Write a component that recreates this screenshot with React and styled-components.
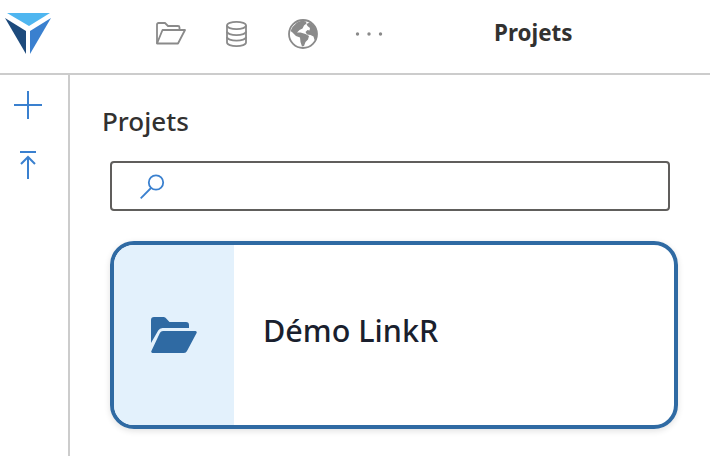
import React from "react";
import styled, { createGlobalStyle } from "styled-components";

const GlobalStyle = createGlobalStyle`
    html, body {
        margin: 0;
        padding: 0;
        background: #fff;
        font-family: "Noto Sans", "Open Sans", sans-serif;
    }
`;

const Page = styled.div`
    width: 710px;
    height: 456px;
    overflow: hidden;
    display: flex;
    flex-direction: column;
`;

const Header = styled.header`
    height: 67px;
    padding-bottom: 6px;
    flex-shrink: 0;
    display: flex;
    align-items: center;
    border-bottom: 2px solid #cccccc;
`;

const LogoBox = styled.div`
    width: 56px;
    display: flex;
    justify-content: center;
`;

const NavIcons = styled.nav`
    display: flex;
    align-items: center;
    margin-left: 100px;
`;

const NavItem = styled.div`
    width: ${(p) => p.$width}px;
    display: flex;
    align-items: center;
`;

const HeaderTitle = styled.div`
    margin-left: 71px;
    padding-bottom: 2px;
    font-size: 22.4px;
    font-weight: 700;
    color: #323130;
`;

const Body = styled.div`
    flex: 1;
    display: flex;
    min-height: 0;
`;

const Sidebar = styled.aside`
    width: 70px;
    box-sizing: border-box;
    flex-shrink: 0;
    border-right: 2px solid #cccccc;
    display: flex;
    flex-direction: column;
    padding: 16px 12px 0 0;
    gap: 30px;
`;

const SideButton = styled.button`
    border: 0;
    padding: 0;
    background: none;
    display: flex;
    justify-content: center;
    height: 30px;
`;

const Main = styled.main`
    flex: 1;
    padding: 27px 32px 0 32px;
`;

const Title = styled.h2`
    margin: 0;
    font-size: 26px;
    line-height: 38px;
    font-weight: 500;
    color: #323130;
`;

const SearchBox = styled.div`
    margin: 21px 0 0 8px;
    height: 50px;
    width: 560px;
    box-sizing: border-box;
    border: 2px solid #605e5c;
    border-radius: 4px;
    display: flex;
    align-items: center;
    padding-left: 28px;
`;

const Card = styled.div`
    margin: 30px 0 0 8px;
    width: 568px;
    height: 188px;
    box-sizing: border-box;
    border: 4px solid #2f6aa3;
    border-radius: 24px;
    display: flex;
    overflow: hidden;
    box-shadow: 0 2px 6px rgba(0, 0, 0, 0.12);
`;

const CardIcon = styled.div`
    width: 120px;
    background: #e3f1fc;
    display: flex;
    align-items: center;
    justify-content: center;
`;

const CardName = styled.div`
    display: flex;
    align-items: center;
    padding: 0 0 10px 29px;
    font-size: 30.5px;
    font-weight: 500;
    color: #1a1f2e;
`;

const Logo = () => (
    <svg width="48" height="42" viewBox="0 0 48 42">
        <polygon points="3,0 46,0 25,13" fill="#4fb6f0" />
        <polygon points="1,5 22,18 22,41" fill="#1d4a7c" />
        <polygon points="47,5 26,18 26,41" fill="#3a80cf" />
    </svg>
);

const OpenFolderOutline = () => (
    <svg width="30" height="23" viewBox="0 0 30 23" fill="none" stroke="#8a8a8a" strokeWidth="1.8" strokeLinejoin="round">
        <path d="M1 21.500V2.500a1.500 1.500 0 0 1 1.500-1.500h6.500l3 3h10a1.500 1.500 0 0 1 1.500 1.500v3" />
        <path d="M1 21.500h21l7-13.500H6.500L1 21.500z" />
    </svg>
);

const Database = () => (
    <svg width="21" height="26" viewBox="0 0 21 26" fill="none" stroke="#8a8a8a" strokeWidth="1.8">
        <ellipse cx="10.500" cy="4.500" rx="9.500" ry="3.600" />
        <path d="M1 4.500v17c0 2 4.300 3.600 9.500 3.600s9.500-1.600 9.500-3.600v-17" />
        <path d="M1 10.500c0 2 4.300 3.600 9.500 3.600s9.500-1.600 9.500-3.600" />
        <path d="M1 16c0 2 4.300 3.600 9.500 3.600s9.500-1.600 9.500-3.600" />
    </svg>
);

const Globe = () => (
    <svg width="30" height="30" viewBox="0 0 30 30">
        <circle cx="15" cy="15" r="14" fill="none" stroke="#8a8a8a" strokeWidth="1.800" />
        <path
            fill="#8a8a8a"
            d="M4.500 8 9 3.500 14 1.500l4 1 .5 2-2.500 2-1.500 3-3 1.500-2.500 2.500 3.500 0 5 1.500 3.500 2-1 3.500-2.500 2.500-1.500 4-2 .5-1.500-4.500-.5-4.500-4-1.500-3.500-3.500L2.500 12z"
        />
        <path
            fill="#8a8a8a"
            d="M18.500 5l3-1.500 4 2.500 2.500 4 1 5-1 4.500-1.500 1.500-1-3.500-3-1.500-3.500-.5-1.500-2.500 2-2 2 .5.500-2.500-2.500-2z"
        />
    </svg>
);

const Dots = () => (
    <svg width="28" height="6" viewBox="0 0 28 6" fill="#8a8a8a">
        <circle cx="2.500" cy="3" r="1.700" />
        <circle cx="14" cy="3" r="1.700" />
        <circle cx="25.500" cy="3" r="1.700" />
    </svg>
);

const Plus = () => (
    <svg width="28" height="28" viewBox="0 0 28 28" stroke="#3a80cf" strokeWidth="2">
        <path d="M14 0v28M0 14h28" />
    </svg>
);

const CollapseUp = () => (
    <svg width="16" height="28" viewBox="0 0 16 28" fill="none" stroke="#3a80cf" strokeWidth="2">
        <path d="M0 1h16M8 28V6M1 13l7-7 7 7" />
    </svg>
);

const Search = () => (
    <svg width="25" height="25" viewBox="0 0 25 25" fill="none" stroke="#3a80cf" strokeWidth="1.800">
        <circle cx="16" cy="8.500" r="7.200" />
        <path d="M11 14L.7 24.300" />
    </svg>
);

const FolderSolid = () => (
    <svg width="46" height="36" viewBox="0 0 46 36" fill="#2f6aa3">
        <path d="M0 3a3 3 0 0 1 3-3h9.500a3 3 0 0 1 2 .8L18.500 5H35a3 3 0 0 1 3 3v3H11.500a5 5 0 0 0-4.300 2.500L0 26z" />
        <path d="M12 14h32.500a1.300 1.300 0 0 1 1.100 1.900L36 34a3.500 3.500 0 0 1-3 2H1.500a1.300 1.300 0 0 1-1.100-1.900L9 15.800A3.500 3.500 0 0 1 12 14z" />
    </svg>
);

export default function App() {
    return (
        <Page>
            <GlobalStyle />
            <Header>
                <LogoBox>
                    <Logo />
                </LogoBox>
                <NavIcons>
                    <NavItem $width={70}><OpenFolderOutline /></NavItem>
                    <NavItem $width={62}><Database /></NavItem>
                    <NavItem $width={67}><Globe /></NavItem>
                    <NavItem $width={68}><Dots /></NavItem>
                </NavIcons>
                <HeaderTitle>Projets</HeaderTitle>
            </Header>
            <Body>
                <Sidebar>
                    <SideButton><Plus /></SideButton>
                    <SideButton><CollapseUp /></SideButton>
                </Sidebar>
                <Main>
                    <Title>Projets</Title>
                    <SearchBox><Search /></SearchBox>
                    <Card>
                        <CardIcon><FolderSolid /></CardIcon>
                        <CardName>Démo LinkR</CardName>
                    </Card>
                </Main>
            </Body>
        </Page>
    );
}
